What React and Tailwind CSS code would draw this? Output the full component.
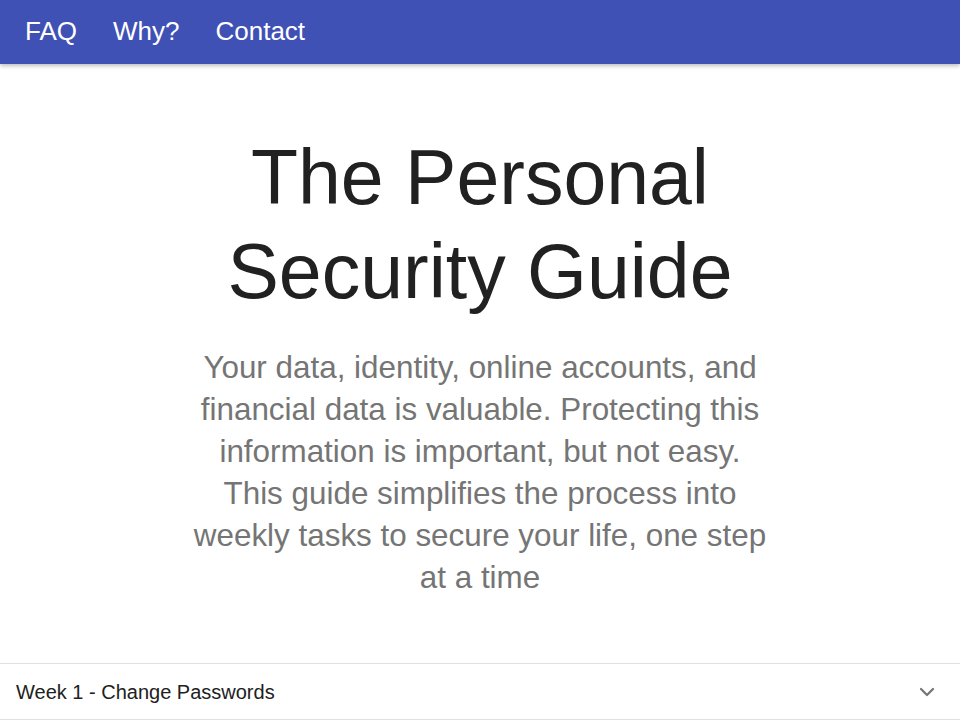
import { ChevronDown } from 'lucide-react';

export default function App() {
  return (
    <div className="min-h-screen bg-white font-['Liberation_Sans',Arial,sans-serif]">
      <nav className="h-16 bg-[#3f51b5] flex items-center pl-[25px] pb-[2px] gap-[36px] shadow-[0_2px_4px_rgba(0,0,0,0.25)] relative z-10">
        <a className="text-white text-[26px]">FAQ</a>
        <a className="text-white text-[26px]">Why?</a>
        <a className="text-white text-[26px]">Contact</a>
      </nav>

      <header className="flex flex-col items-center pt-[67px]">
        <h1 className="text-[77px] leading-[1.215] text-[#212121] text-center">
          The Personal
          <br />
          Security Guide
        </h1>
        <p className="mt-[29px] max-w-[578px] text-center text-[31.4px] leading-[42px] text-[#757575]">
          Your data, identity, online accounts, and financial data is valuable. Protecting this
          information is important, but not easy. This guide simplifies the process into weekly
          tasks to secure your life, one step at a time
        </p>
      </header>

      <section className="mt-[64px] border-t border-[#e0e0e0]">
        <div className="h-[56px] flex items-center justify-between pl-4 pr-[21px] border-b border-[#e0e0e0]">
          <span className="text-[20px] text-[#212121]">Week 1 - Change Passwords</span>
          <ChevronDown size={24} strokeWidth={2.25} className="text-[#757575]" />
        </div>
      </section>
    </div>
  );
}
